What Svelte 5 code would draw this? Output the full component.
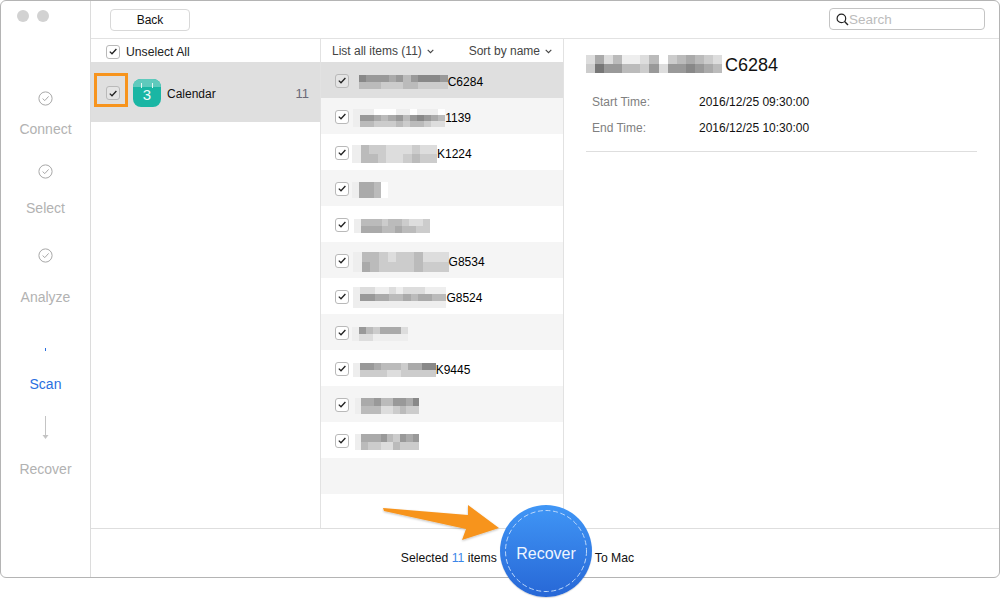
<script>
  const steps = [
    { name: 'Connect', icon: 'done', top: 90, gap: 15 },
    { name: 'Select', icon: 'done', top: 27, gap: 21 },
    { name: 'Analyze', icon: 'done', top: 32, gap: 26 },
    { name: 'Scan', icon: 'tick', top: 37, gap: 19, active: true },
    { name: 'Recover', icon: 'arrow', top: 24, gap: 21 }
  ];

  // mosaic rows: one hex digit per cell, grey = digit * 17
  const items = [
    { x: 10, cw: 7.4, ch: 7, px: ['8999a9b98889', 'bbbcccbbcccc'], code: 'C6284' },
    { x: 4, cw: 7.1, ch: 6, px: ['eeefffeefeeef', 'e99aba9b989ab', 'ebbcccbcbbcdd'], code: '1139' },
    { x: 3, cw: 8.5, ch: 9, px: ['ebccdddcdd', 'ebbcddcbcc'], code: 'K1224' },
    { x: 3, cw: 7.3, ch: 8, px: ['eaabf', 'eaabf'], code: '' },
    { x: 5, cw: 6.9, ch: 7, px: ['ebbbcbbcddc', 'eaaabbabbcc'], code: '' },
    { x: 4, cw: 8.7, ch: 10, px: ['ebbcdccbddd', 'eabccccbccc'], code: 'G8534' },
    { x: 4, cw: 7.2, ch: 7, px: ['eddeededddeee', 'e99aabbabaabb', 'eeeeeeeeeeeee'], code: 'G8524' },
    { x: 3, cw: 7, ch: 7, px: ['e9bcaaad', 'eddeeeee'], code: '' },
    { x: 4, cw: 6.9, ch: 7, px: ['e99abbbcaa88', 'eccccddccccc'], code: 'K9445' },
    { x: 6, cw: 6.4, ch: 8, px: ['eaa9bb99a8', 'ebbbddcbcc'], code: '' },
    { x: 6, cw: 6.4, ch: 8, px: ['eaaa9bc9a9', 'ebccddbccc'], code: '' }
  ];

  const title = { cw: 9.07, ch: 9, px: ['dadbeedbfcbabcd', 'c799bbc9d9989ab'] };

  function grey(d) {
    const v = parseInt(d, 16) * 17;
    return `rgb(${v},${v},${v})`;
  }
</script>

{#snippet check()}
  <span class="check">
    <svg width="8" height="7" viewBox="0 0 8 7"><path d="M0.8 3.6 L3 5.8 L7.4 1" fill="none" stroke="#222" stroke-width="1.3" /></svg>
  </span>
{/snippet}

{#snippet chevron()}
  <svg class="chev" width="7" height="5" viewBox="0 0 7 5"><path d="M0.7 0.8 L3.5 3.6 L6.3 0.8" fill="none" stroke="#444" stroke-width="1.1" /></svg>
{/snippet}

{#snippet mosaic(m)}
  <span class="mosaic">
    {#each m.px as row}
      <span class="mrow">
        {#each row.split('') as d}
          <i style="width:{m.cw}px;height:{m.ch}px;background:{grey(d)}"></i>
        {/each}
      </span>
    {/each}
  </span>
{/snippet}

<div class="page">
  <div class="window">
    <aside class="side">
      <div class="lights"><span></span><span></span></div>
      {#each steps as s}
        <div class="step" class:active={s.active} style="margin-top:{s.top}px">
          <div class="step-icon">
            {#if s.icon === 'done'}
              <svg width="15" height="15" viewBox="0 0 15 15">
                <circle cx="7.5" cy="7.5" r="6.6" fill="none" stroke="#a8a8a8" stroke-width="1" />
                <path d="M4.6 7.6 L6.8 9.6 L10.6 5.4" fill="none" stroke="#a8a8a8" stroke-width="1" />
              </svg>
            {:else if s.icon === 'tick'}
              <svg width="15" height="15" viewBox="0 0 15 15"><path d="M7.5 6 V9" stroke="#2a6fe0" stroke-width="1" /></svg>
            {:else}
              <svg width="15" height="24" viewBox="0 0 15 24">
                <path d="M7.5 0 V19" stroke="#c4c4c4" stroke-width="1" />
                <path d="M4.5 19 H10.5 L7.5 23 Z" fill="#c4c4c4" />
              </svg>
            {/if}
          </div>
          <div class="step-label" style="margin-top:{s.gap}px">{s.name}</div>
        </div>
      {/each}
    </aside>

    <main class="main">
      <header class="topbar">
        <button class="back">Back</button>
        <div class="search">
          <svg width="13" height="13" viewBox="0 0 13 13">
            <circle cx="5.4" cy="5.4" r="4.3" fill="none" stroke="#222" stroke-width="1.2" />
            <path d="M8.6 8.6 L12 12" stroke="#222" stroke-width="1.4" />
          </svg>
          <span>Search</span>
        </div>
      </header>

      <div class="content">
        <section class="cats">
          <div class="cats-head">{@render check()}<span>Unselect All</span></div>
          <div class="cat-row">
            <span class="highlight"></span>
            {@render check()}
            <svg class="cal" width="28" height="28" viewBox="0 0 28 28">
              <defs><clipPath id="calclip"><rect width="28" height="28" rx="8" /></clipPath></defs>
              <g clip-path="url(#calclip)">
                <rect width="28" height="28" fill="#1ab6a4" />
                <rect width="28" height="8" fill="#5fcabd" />
                <path d="M8.5 4 V9 M19.5 4 V9" stroke="#e4f6f3" stroke-width="1" />
              </g>
              <text x="14" y="21" text-anchor="middle" class="cal-num">3</text>
            </svg>
            <span class="cat-name">Calendar</span>
            <span class="cat-count">11</span>
          </div>
        </section>

        <section class="list">
          <div class="list-head">
            <span>List all items (11){@render chevron()}</span>
            <span>Sort by name{@render chevron()}</span>
          </div>
          {#each items as it, i}
            <div class="item" class:selected={i === 0}>
              {@render check()}
              <span class="item-name" style="margin-left:{it.x}px">
                {@render mosaic(it)}{it.code}
              </span>
            </div>
          {/each}
          <div class="item filler"></div>
        </section>

        <section class="detail">
          <h2>{@render mosaic(title)}<span class="title-code">C6284</span></h2>
          <div class="fields">
            <div class="field"><span class="field-name">Start Time:</span><span>2016/12/25 09:30:00</span></div>
            <div class="field"><span class="field-name">End Time:</span><span>2016/12/25 10:30:00</span></div>
          </div>
        </section>
      </div>

      <footer class="footer">
        <span>Selected <b>11</b> items</span>
        <span class="btn-space"></span>
        <span>To Mac</span>
      </footer>
    </main>

    <svg class="pointer" width="124" height="44" viewBox="0 0 124 44">
      <defs>
        <filter id="soft" x="-10%" y="-20%" width="120%" height="150%">
          <feDropShadow dx="0" dy="1" stdDeviation="1" flood-color="#000" flood-opacity="0.25" />
        </filter>
      </defs>
      <path d="M1 5 L86 12 L86 2 L117 25 L80 37 L84 26 L2 8 Z" fill="#f7941d" filter="url(#soft)" />
    </svg>

    <button class="recover">
      <svg class="dash" width="92" height="92" viewBox="0 0 92 92">
        <circle cx="46" cy="46" r="40.5" fill="none" stroke="#bcd8fb" stroke-width="1" stroke-dasharray="5 2.6" />
      </svg>
      <span>Recover</span>
    </button>
  </div>
</div>

<style>
  :global(body) {
    margin: 0;
    background: #fff;
    font-family: "Liberation Sans", Arial, sans-serif;
    color: #111;
  }

  .page {
    height: 604px;
    overflow: hidden;
  }
  .window {
    position: relative;
    box-sizing: border-box;
    width: 1000px;
    height: 578px;
    display: flex;
    border: 1px solid #b4b4b4;
    border-radius: 6px;
  }

  .side {
    width: 89px;
    flex: none;
    border-right: 1px solid #dcdcdc;
    display: flex;
    flex-direction: column;
    align-items: center;
    position: relative;
  }
  .lights {
    position: absolute;
    top: 9px;
    left: 16px;
    display: flex;
    gap: 8px;
  }
  .lights span {
    width: 12px;
    height: 12px;
    border-radius: 50%;
    background: #d2d2d2;
  }
  .step {
    display: flex;
    flex-direction: column;
    align-items: center;
  }
  .step-icon {
    display: flex;
    line-height: 0;
  }
  .step-label {
    font-size: 14px;
    line-height: 16px;
    color: #b2b2b2;
  }
  .step.active .step-label {
    color: #2a6fe0;
  }

  .main {
    flex: 1;
    min-width: 0;
    display: flex;
    flex-direction: column;
  }
  .topbar {
    height: 37px;
    flex: none;
    border-bottom: 1px solid #e2e2e2;
    display: flex;
    align-items: flex-start;
    justify-content: space-between;
    padding: 0 14px 0 19px;
  }
  .back {
    width: 80px;
    height: 22px;
    margin-top: 8px;
    padding: 0;
    background: #fff;
    border: 1px solid #d8d8d8;
    border-radius: 4px;
    font: 12px "Liberation Sans", Arial, sans-serif;
    color: #111;
  }
  .search {
    box-sizing: border-box;
    width: 156px;
    height: 22px;
    margin-top: 7px;
    border: 1px solid #c4c4c4;
    border-radius: 4px;
    display: flex;
    align-items: center;
    padding-left: 6px;
    font-size: 13.5px;
    color: #bcbcbc;
  }

  .content {
    flex: 1;
    min-height: 0;
    display: flex;
  }
  .cats {
    box-sizing: border-box;
    width: 230px;
    flex: none;
    border-right: 1px solid #e2e2e2;
  }
  .cats-head {
    height: 23px;
    display: flex;
    align-items: center;
    gap: 6px;
    padding: 2px 0 0 15px;
    box-sizing: border-box;
    font-size: 12.2px;
    color: #222;
  }
  .cat-row {
    position: relative;
    box-sizing: border-box;
    height: 60px;
    background: #dfdfdf;
    display: flex;
    align-items: center;
    padding: 2px 11px 0 15px;
  }
  .highlight {
    position: absolute;
    left: 3px;
    top: 11px;
    width: 34px;
    height: 34px;
    box-sizing: border-box;
    border: 3px solid #f7941d;
  }
  .cal {
    margin-left: 13px;
    flex: none;
  }
  .cal-num {
    font-size: 15px;
    font-family: "Liberation Sans", Arial, sans-serif;
    fill: #f2fbfa;
  }
  .cat-name {
    margin: 1px 0 0 6px;
    font-size: 12px;
    flex: 1;
  }
  .cat-count {
    margin-top: 1px;
    font-size: 13px;
    color: #6c6a78;
  }

  .check {
    box-sizing: border-box;
    width: 14px;
    height: 14px;
    flex: none;
    border: 1px solid #b9b9b9;
    border-radius: 3px;
    display: flex;
    align-items: center;
    justify-content: center;
    background: #fff;
  }
  .cat-row .check, .item.selected .check {
    background: #e4e4e4;
  }
  .item .check {
    margin-top: -2px;
  }

  .list {
    box-sizing: border-box;
    width: 243px;
    flex: none;
    border-right: 1px solid #e2e2e2;
    overflow: hidden;
  }
  .list-head {
    height: 23px;
    display: flex;
    justify-content: space-between;
    padding: 0 11px;
    font-size: 12px;
    line-height: 25px;
    color: #444;
  }
  .chev {
    margin-left: 5px;
    vertical-align: 1px;
  }
  .item {
    box-sizing: border-box;
    height: 36px;
    display: flex;
    align-items: center;
    padding: 3px 0 0 14px;
    background: #fff;
    font-size: 12px;
    color: #000;
  }
  .item:nth-child(odd) {
    background: #f5f5f5;
  }
  .item.selected {
    background: #dfdfdf;
  }
  .item-name {
    display: flex;
    align-items: center;
  }
  .mosaic {
    display: inline-flex;
    flex-direction: column;
  }
  .mrow {
    display: flex;
  }
  .mrow i {
    display: block;
  }

  .detail {
    flex: 1;
    min-width: 0;
    padding: 16px 22px 0 22px;
  }
  .detail h2 {
    margin: 0;
    display: flex;
    align-items: center;
    font-size: 18px;
    font-weight: 400;
    height: 20px;
  }
  .detail h2 .mosaic {
    margin-bottom: 3px;
  }
  .title-code {
    margin-left: 3px;
  }
  .fields {
    margin-top: 14px;
    padding: 0 0 10px 6px;
    border-bottom: 1px solid #dedede;
  }
  .field {
    height: 26px;
    display: flex;
    align-items: center;
    font-size: 12px;
  }
  .field-name {
    width: 107px;
    color: #808080;
  }

  .footer {
    height: 49px;
    flex: none;
    box-sizing: border-box;
    border-top: 1px solid #dedede;
    display: flex;
    align-items: center;
    justify-content: center;
    font-size: 12.2px;
    padding: 9px 55px 0 0;
  }
  .footer b {
    font-weight: 400;
    color: #3a86e8;
  }
  .btn-space {
    width: 98px;
  }

  .pointer {
    position: absolute;
    left: 381px;
    top: 502px;
  }
  .recover {
    position: absolute;
    left: 499px;
    top: 504px;
    width: 92px;
    height: 92px;
    padding: 0;
    border: none;
    border-radius: 50%;
    background: linear-gradient(#4096f6, #2767d6);
    box-shadow: 0 1px 1px rgba(0, 0, 0, 0.15);
    display: flex;
    align-items: center;
    justify-content: center;
  }
  .dash {
    position: absolute;
    left: 0;
    top: 0;
  }
  .recover span {
    font: 16px "Liberation Sans", Arial, sans-serif;
    color: #eef5ff;
    padding-top: 6px;
  }
</style>
